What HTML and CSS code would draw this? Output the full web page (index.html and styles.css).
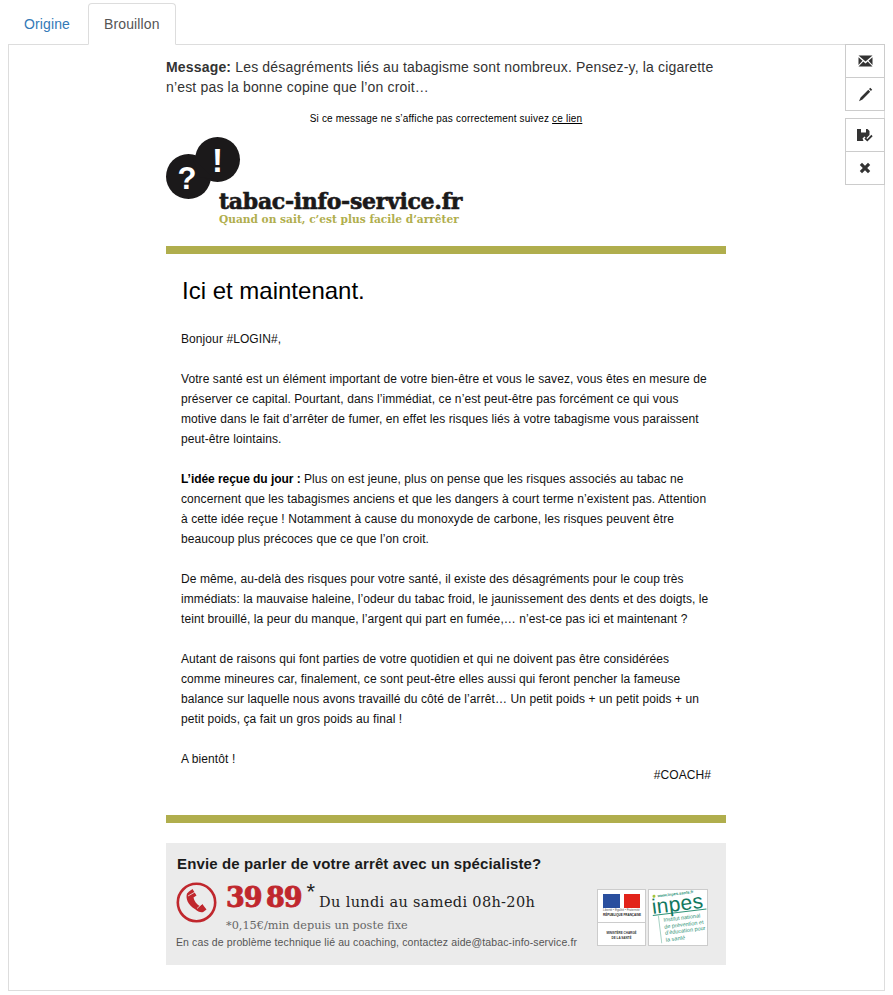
FILE: index.html
```html
<!DOCTYPE html>
<html lang="fr">
<head>
<meta charset="utf-8">
<title>Brouillon</title>
<link rel="stylesheet" href="styles.css">
</head>
<body>
<div class="page">
  <ul class="tabs">
    <li class="tab"><a href="#">Origine</a></li>
    <li class="tab active"><a href="#">Brouillon</a></li>
  </ul>
  <div class="panel">
    <div class="toolbar">
      <div class="btn-group">
        <button class="btn"><svg width="15" height="14" viewBox="0 0 15 14"><path class="ic" d="M.5 1.500h14L7.500 7.500zM.5 3.200l4 3.600-4 4.200zM14.500 3.200l-4 3.600 4 4.200zM5.300 7.500l2.200 1.900 2.200-1.900 4.800 5H.5z"/></svg></button>
        <button class="btn"><svg width="15" height="15" viewBox="0 0 15 15"><path class="ic" d="M12.300 .8l1.900 1.900-1.300 1.300-1.900-1.900zM10.300 2.800l1.900 1.900-7.700 7.700-3.500 1.800 1.600-3.700z"/></svg></button>
      </div>
      <div class="btn-group">
        <button class="btn"><svg width="16" height="14" viewBox="0 0 16 14"><path class="ic" d="M0 1h10.500l2 2v4L9.300 10.200 7.500 8.500 5.500 10.500 6.500 13H0zM4 1v3.500h5V1z"/><path class="ic-line" d="M8 10l2.300 2.300L15 7.500"/></svg></button>
        <button class="btn"><svg width="12" height="12" viewBox="0 0 12 12"><path class="ic" d="M3 .8L6 3.800 9 .8l2.200 2.200-3 3 3 3L9 11.200l-3-3-3 3L.8 9l3-3-3-3z"/></svg></button>
      </div>
    </div>
    <div class="mail">
      <p class="message"><strong>Message:</strong> Les désagréments liés au tabagisme sont nombreux. Pensez-y, la cigarette n’est pas la bonne copine que l’on croit…</p>
      <p class="notice">Si ce message ne s’affiche pas correctement suivez <a href="#">ce lien</a></p>
      <div class="logo">
        <svg class="logo-mark" width="75" height="63" viewBox="0 0 75 63">
          <circle class="mark-fill" cx="22.500" cy="39.500" r="22.500"/>
          <circle class="mark-fill" cx="51.500" cy="22.500" r="22.500"/>
          <path class="mark-fill" d="M26 20L48 42 34 40 30 30z"/>
          <text class="mark-q" x="21" y="52">?</text>
          <text class="mark-x" x="51.500" y="35">!</text>
        </svg>
        <div class="logo-name">tabac-info-service.fr</div>
        <div class="logo-tag">Quand on sait, c’est plus facile d’arrêter</div>
      </div>
      <div class="rule"></div>
      <div class="content">
        <h1>Ici et maintenant.</h1>
        <p>Bonjour #LOGIN#,</p>
        <p>Votre santé est un élément important de votre bien-être et vous le savez, vous êtes en mesure de préserver ce capital. Pourtant, dans l’immédiat, ce n’est peut-être pas forcément ce qui vous motive dans le fait d’arrêter de fumer, en effet les risques liés à votre tabagisme vous paraissent peut-être lointains.</p>
        <p><strong>L’idée reçue du jour :</strong> Plus on est jeune, plus on pense que les risques associés au tabac ne concernent que les tabagismes anciens et que les dangers à court terme n’existent pas. Attention à cette idée reçue ! Notamment à cause du monoxyde de carbone, les risques peuvent être beaucoup plus précoces que ce que l’on croit.</p>
        <p>De même, au-delà des risques pour votre santé, il existe des désagréments pour le coup très immédiats: la mauvaise haleine, l’odeur du tabac froid, le jaunissement des dents et des doigts, le teint brouillé, la peur du manque, l’argent qui part en fumée,… n’est-ce pas ici et maintenant ?</p>
        <p>Autant de raisons qui font parties de votre quotidien et qui ne doivent pas être considérées comme mineures car, finalement, ce sont peut-être elles aussi qui feront pencher la fameuse balance sur laquelle nous avons travaillé du côté de l’arrêt… Un petit poids + un petit poids + un petit poids, ça fait un gros poids au final !</p>
        <p class="bye">A bientôt !</p>
        <p class="coach">#COACH#</p>
      </div>
      <div class="rule"></div>
      <div class="footer">
        <div class="footer-main">
          <div class="footer-title">Envie de parler de votre arrêt avec un spécialiste?</div>
          <div class="phone-row">
            <svg class="phone-icon" width="41" height="41" viewBox="0 0 41 41"><circle class="ring" cx="20.500" cy="20.500" r="18.700"/><path class="handset" d="M13 9.500l3.500-2.500 4 6.500-3 2c.7 3.500 2.700 6.500 6 8.500l2.800-2 4.200 5.500-3.300 2.500c-2.500 .8-5.500-.5-8-2.800C11.500 23 9.500 16 11 11.500z"/><path class="handset-gap" d="M12 14l7-4M21 26.500l5-4.500"/></svg>
            <div class="phone-text">
              <div class="phone-line"><span class="number">39 89</span><span class="star">*</span><span class="hours">Du lundi au samedi 08h-20h</span></div>
              <div class="price">*0,15€/min depuis un poste fixe</div>
            </div>
          </div>
          <div class="contact">En cas de problème technique lié au coaching, contactez aide@tabac-info-service.fr</div>
        </div>
        <div class="partners">
          <div class="card card-rf">
            <div class="rf-top">
              <div class="flag"><span class="flag-b"></span><span class="flag-w"></span><span class="flag-r"></span></div>
              <div class="rf-motto">Liberté • Égalité • Fraternité</div>
              <div class="rf-name">RÉPUBLIQUE FRANÇAISE</div>
            </div>
            <div class="rf-min">MINISTÈRE CHARGÉ<br>DE LA SANTÉ</div>
          </div>
          <div class="card card-inpes">
            <div class="inpes-inner">
              <div class="inpes-url">www.inpes.sante.fr</div>
              <div class="inpes-name">inpes</div>
              <div class="inpes-desc">Institut national<br>de prévention et<br>d’éducation pour<br>la santé</div>
            </div>
          </div>
        </div>
      </div>
    </div>
  </div>
</div>
</body>
</html>
```
FILE: styles.css
```css
* { box-sizing: border-box; }
html, body { margin: 0; padding: 0; background: #fff; }
body { font-family: "Liberation Sans", Arial, sans-serif; font-size: 14px; line-height: 20px; color: #333; letter-spacing: .17px; }
.page { padding: 3px 8px 0; }

.tabs { display: flex; list-style: none; margin: 0; padding: 0; height: 42px; }
.tab { margin-right: 2px; }
.tab a { display: block; height: 42px; padding: 10px 15px; border: 1px solid transparent; border-radius: 4px 4px 0 0; color: #337ab7; text-decoration: none; line-height: 20px; letter-spacing: .12px; }
.tab.active a { color: #555; background: #fff; border-color: #ddd #ddd #fff; }
.tab.active { position: relative; z-index: 1; }

.panel { position: relative; height: 947px; margin-top: -1px; border: 1px solid #ddd; padding: 12px 1px 0 0; }

.toolbar { position: absolute; top: -1px; right: -1px; display: flex; flex-direction: column; gap: 7px; width: 40px; }
.btn-group { display: flex; flex-direction: column; }
.btn { display: flex; align-items: center; justify-content: center; width: 40px; height: 34px; margin: 0 0 -1px; padding: 0; background: #fff; border: 1px solid #ccc; }
.btn-group .btn:last-child { margin-bottom: 0; }
.ic { fill: #333; }
.ic-line { fill: none; stroke: #333; stroke-width: 1.800; }

.mail { width: 560px; margin: 0 auto; }
.message { margin: 0; }
.notice { margin: 15px 0 0; font-size: 10px; line-height: 14px; text-align: center; color: #000; letter-spacing: .19px; }
.notice a { color: #000; }

.logo { position: relative; height: 109px; margin-top: 11px; }
.logo-mark { display: block; }
.mark-fill { fill: #1b191a; }
.mark-q { fill: #fff; font-weight: bold; font-size: 31px; text-anchor: middle; }
.mark-x { fill: #fff; font-weight: bold; font-size: 33px; text-anchor: middle; }
.logo-name { position: absolute; left: 53px; top: 53px; font-family: "DejaVu Serif", serif; font-weight: bold; font-size: 22px; line-height: 22px; letter-spacing: -.3px; color: #1b191a; white-space: nowrap; -webkit-text-stroke: .6px #1b191a; }
.logo-tag { position: absolute; left: 53px; top: 75px; font-family: "DejaVu Serif", serif; font-weight: bold; font-size: 10.600px; line-height: 14px; letter-spacing: 0; color: #b0ae4d; white-space: nowrap; }

.rule { height: 8px; background: #b0ae4d; }

.content { padding: 0 15px; font-size: 12px; line-height: 20px; color: #111; letter-spacing: .085px; }
.content h1 { margin: 0; padding: 23px 0 24px 1px; font-size: 24px; line-height: 28px; font-weight: normal; color: #000; letter-spacing: 0; }
.content p { margin: 0 0 20px; }
.content p.bye { margin: 0; }
.content p.coach { margin: -4px 0 30px; text-align: right; }
.content strong { color: #000; letter-spacing: -.05px; }

.footer { display: flex; justify-content: space-between; height: 122px; margin-top: 20px; padding: 11px 18px 0 11px; background: #ebebeb; }
.footer-main { display: flex; flex-direction: column; }
.footer-title { font-weight: bold; font-size: 15px; line-height: 20px; letter-spacing: .13px; color: #1b1b1b; white-space: nowrap; }
.phone-row { display: flex; gap: 8px; margin-top: 6px; }
.phone-icon { flex: none; margin-top: 2px; margin-left: -1px; }
.ring { fill: none; stroke: #c0272d; stroke-width: 2.600; }
.handset { fill: #c0272d; }
.handset-gap { fill: none; stroke: #ebebeb; stroke-width: .8; }
.phone-text { margin-left: 1px; }
.phone-line { display: flex; align-items: baseline; white-space: nowrap; height: 36px; }
.number { font-family: "DejaVu Serif", serif; font-weight: bold; font-size: 27px; line-height: 36px; letter-spacing: -1px; word-spacing: -4px; color: #c0272d; -webkit-text-stroke: .9px #c0272d; }
.star { font-size: 22px; color: #222; position: relative; top: -8px; margin: 0 4px 0 5px; letter-spacing: 0; }
.hours { font-family: "DejaVu Serif", serif; font-size: 14.500px; letter-spacing: .33px; color: #222; }
.price { margin-top: 3px; font-family: "DejaVu Serif", serif; font-size: 11.300px; line-height: 14px; letter-spacing: 0; color: #666; white-space: nowrap; }
.contact { margin-top: 2px; font-size: 10.500px; line-height: 14px; letter-spacing: .12px; color: #555; white-space: nowrap; margin-left: -1px; }

.partners { display: flex; gap: 2px; margin-top: 35px; height: 57px; letter-spacing: 0; }
.card { height: 57px; background: #fff; border: 1px solid #ccc; }
.card-rf { width: 49px; display: flex; flex-direction: column; }
.rf-top { height: 33px; padding: 4px 5px 0; border-bottom: 1px solid #ccc; }
.flag { display: flex; height: 14px; }
.flag-b { width: 17px; background: #2a4f9e; }
.flag-w { width: 4px; background: #fff; }
.flag-r { flex: 1; background: #e2231a; }
.rf-motto { font-size: 3px; line-height: 5px; color: #555; white-space: nowrap; }
.rf-name { font-size: 3px; line-height: 5px; color: #222; font-weight: bold; white-space: nowrap; }
.rf-min { padding-top: 8px; font-size: 3px; line-height: 5px; color: #333; font-weight: bold; text-align: center; white-space: nowrap; }
.card-inpes { width: 60px; overflow: hidden; }
.inpes-inner { padding: 1px 0 0 4px; transform: rotate(-7deg); transform-origin: 50% 50%; color: #2f9378; }
.inpes-url { display: flex; align-items: center; gap: 2px; font-size: 4px; line-height: 5px; font-weight: bold; padding-left: 2px; white-space: nowrap; }
.inpes-url::before { content: ""; width: 3px; height: 3px; border-radius: 50%; background: #a5c63b; }
.inpes-name { font-size: 21px; line-height: 16px; letter-spacing: .3px; color: #12795f; border-bottom: 1px solid #2f9378; }
.inpes-desc { margin-left: 5px; padding: 2px 0 0 4px; font-size: 5.500px; line-height: 6.500px; border-left: 1px solid #a9d3c6; white-space: nowrap; }
```
